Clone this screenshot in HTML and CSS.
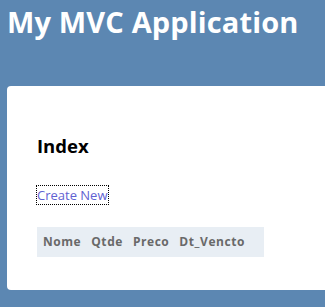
FILE: index.html
```html
<!DOCTYPE html>
<html>
<head>
<meta charset="utf-8">
<link rel="stylesheet" href="styles.css">
</head>
<body>
<div class="page">
  <header class="header">
    <h1 class="title">My MVC Application</h1>
  </header>
  <main class="main">
    <h2 class="heading">Index</h2>
    <p class="actions"><a class="create" href="#">Create New</a></p>
    <table class="grid">
      <tr>
        <th>Nome</th>
        <th>Qtde</th>
        <th>Preco</th>
        <th>Dt_Vencto</th>
        <th class="blank"></th>
      </tr>
    </table>
  </main>
</div>
</body>
</html>
```
FILE: styles.css
```css
html, body {
  margin: 0;
  padding: 0;
  background: #5c87b2;
  height: 100%;
  overflow: hidden;
}
.page {
  display: flex;
  flex-direction: column;
  font-family: "Open Sans", "DejaVu Sans", sans-serif;
}
.header {
  height: 86px;
  padding-left: 7px;
}
.title {
  margin: 0;
  padding-top: 2px;
  color: #fff;
  font-size: 29px;
  font-weight: bold;
  line-height: 40px;
  letter-spacing: 0.15px;
  white-space: nowrap;
}
.main {
  margin-left: 7px;
  height: 204px;
  box-sizing: border-box;
  background: #fff;
  border-radius: 4px 0 0 4px;
  padding: 48px 30px 0 30px;
  display: flex;
  flex-direction: column;
  align-items: flex-start;
}
.heading {
  margin: 0;
  font-size: 18.5px;
  line-height: 24px;
  font-weight: bold;
  color: #000;
}
.actions {
  margin: 29px 0 0 0;
  line-height: 16px;
  font-size: 13px;
}
.create {
  color: #5f62d2;
  text-decoration: none;
  outline: 1px dotted #000;
}
.grid {
  margin-top: 24px;
  border-collapse: collapse;
  border: 1px solid #e8eef4;
}
.grid th {
  background: #e8eef4;
  padding: 6px 5px;
  text-align: left;
  font-size: 12px;
  font-weight: bold;
  color: #696969;
  line-height: 16px;
  letter-spacing: 0.55px;
}
.grid th.blank {
  width: 3px;
}
```
